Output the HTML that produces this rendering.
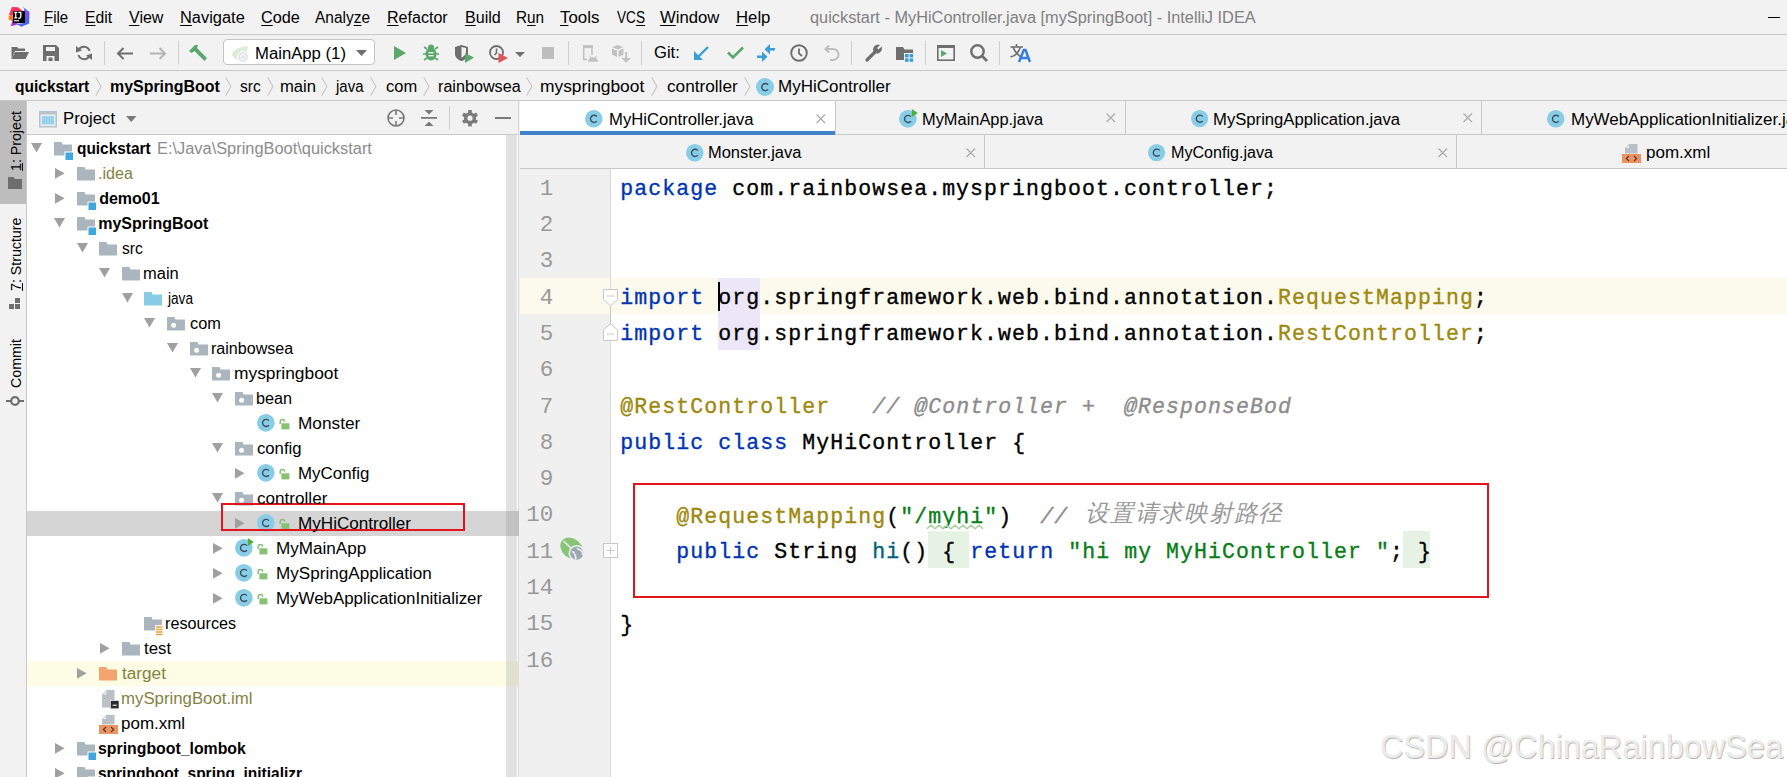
<!DOCTYPE html><html><head><meta charset="utf-8"><style>html,body{margin:0;padding:0;width:1787px;height:777px;overflow:hidden;position:relative;font-family:'Liberation Sans',sans-serif}</style></head><body><div style="position:absolute;left:0px;top:0px;width:1787px;height:777px;background:#f2f2f2;"></div><div style="position:absolute;left:0px;top:34px;width:1787px;height:1px;background:#c9c9c9;"></div><div style="position:absolute;left:0px;top:70px;width:1787px;height:1px;background:#c9c9c9;"></div><div style="position:absolute;left:0px;top:100px;width:1787px;height:1px;background:#c9c9c9;"></div><div style="position:absolute;left:26px;top:101px;width:1px;height:676px;background:#c9c9c9;"></div><div style="position:absolute;left:0px;top:101px;width:26px;height:103px;background:#bdbdbd;"></div><div style="position:absolute;left:27px;top:101px;width:492px;height:33px;background:#f2f2f2;"></div><div style="position:absolute;left:27px;top:134px;width:492px;height:1px;background:#c9c9c9;"></div><div style="position:absolute;left:27px;top:135px;width:492px;height:642px;background:#ffffff;"></div><div style="position:absolute;left:506px;top:135px;width:10.7px;height:642px;background:#e2e2e2;"></div><div style="position:absolute;left:518px;top:101px;width:1px;height:676px;background:#d9d9d9;"></div><div style="position:absolute;left:519px;top:101px;width:1px;height:676px;background:#f0f0f0;"></div><div style="position:absolute;left:520px;top:101px;width:1267px;height:33px;background:#f2f2f2;"></div><div style="position:absolute;left:520px;top:134px;width:1267px;height:1px;background:#c9c9c9;"></div><div style="position:absolute;left:520px;top:135px;width:1267px;height:33px;background:#f2f2f2;"></div><div style="position:absolute;left:520px;top:168px;width:1267px;height:1px;background:#c9c9c9;"></div><div style="position:absolute;left:520px;top:101px;width:315px;height:30px;background:#ffffff;"></div><div style="position:absolute;left:520px;top:131px;width:315px;height:4px;background:#4083c9;"></div><div style="position:absolute;left:835px;top:101px;width:1px;height:33px;background:#c9c9c9;"></div><div style="position:absolute;left:1125px;top:101px;width:1px;height:33px;background:#c9c9c9;"></div><div style="position:absolute;left:1481px;top:101px;width:1px;height:33px;background:#c9c9c9;"></div><div style="position:absolute;left:984px;top:135px;width:1px;height:33px;background:#c9c9c9;"></div><div style="position:absolute;left:1456px;top:135px;width:1px;height:33px;background:#c9c9c9;"></div><div style="position:absolute;left:520px;top:169px;width:1267px;height:608px;background:#ffffff;"></div><div style="position:absolute;left:520px;top:169px;width:90px;height:608px;background:#f0f0f0;"></div><div style="position:absolute;left:610px;top:169px;width:1px;height:608px;background:#d9d9d9;"></div><div style="position:absolute;left:520px;top:277.9px;width:1267px;height:36.3px;background:#fcfaed;"></div><div style="position:absolute;left:610px;top:277.9px;width:1px;height:36.3px;background:#d9d9d9;"></div><div style="position:absolute;left:1768px;top:17px;width:12px;height:1.3px;background:#000;"></div><svg style="position:absolute;left:4px;top:2px;overflow:visible" width="32" height="30" viewBox="4 2 32 30">
<polygon points="9,14.5 12,7 18,7.3 22,10.5 22,13 13,13 13,16" fill="#fe2f5f"/>
<polygon points="8.8,15.6 13.5,14.8 13.5,21.5 8.6,19.5" fill="#fa7c14"/>
<polygon points="10.8,26.2 13,19 18,24.2" fill="#a52ee0"/>
<polygon points="22.8,6.8 29.2,12 29.2,23.6 21.4,26.8 16.5,24 24.5,23 24.5,9" fill="#4b63f2"/>
<polygon points="24.5,9 29.2,12 29.2,18 24.5,17" fill="#7a4cf3"/>
<rect x="13" y="11" width="12" height="12" fill="#000"/>
<path d="M14.2 12.4 H17.3 M15.75 12.4 V17.9 M14.2 17.9 H17.3" stroke="#fff" stroke-width="1.25"/>
<path d="M18.2 12.4 H21.5 M20.8 12.4 V16.5 Q20.8 18.2 19.2 18.2 H18.3" stroke="#fff" stroke-width="1.35" fill="none"/>
<rect x="14" y="20" width="5" height="1.4" fill="#cfcfcf"/>
</svg><svg style="position:absolute;left:11px;top:46px;overflow:visible" width="18" height="14" viewBox="0 0 18 14"><path d="M0.5 1 H6 L7.5 2.5 H14 V5 H4 L0.5 13 Z" fill="#6e6e6e"/><path d="M4 6 H18 L14.5 13 H0.5 Z" fill="#6e6e6e"/></svg><svg style="position:absolute;left:43px;top:45px;overflow:visible" width="16" height="16" viewBox="0 0 16 16"><path d="M0 0 H13 L16 3 V16 H0 Z" fill="#6e6e6e"/><rect x="3" y="2" width="9" height="4" fill="#f2f2f2"/><rect x="3.5" y="11" width="8" height="5" fill="#f2f2f2"/><rect x="5.5" y="12.5" width="4" height="3.5" fill="#6e6e6e"/></svg><svg style="position:absolute;left:76px;top:45px;overflow:visible" width="16" height="16" viewBox="0 0 16 16"><path d="M13.5 6 A6 6 0 0 0 2.5 5" stroke="#6e6e6e" stroke-width="2" fill="none"/><path d="M2.5 10 A6 6 0 0 0 13.5 11" stroke="#6e6e6e" stroke-width="2" fill="none"/><polygon points="0,1 6,5.5 0,7.5" fill="#6e6e6e"/><polygon points="16,15 10,10.5 16,8.5" fill="#6e6e6e"/></svg><div style="position:absolute;left:104px;top:41px;width:1px;height:24px;background:#cfcfcf;"></div><svg style="position:absolute;left:116px;top:47px;overflow:visible" width="17" height="13" viewBox="0 0 17 13"><path d="M17 6.5 H3" stroke="#6e6e6e" stroke-width="2"/><path d="M7.5 1 L2 6.5 L7.5 12" stroke="#6e6e6e" stroke-width="2" fill="none"/></svg><svg style="position:absolute;left:150px;top:47px;overflow:visible" width="17" height="13" viewBox="0 0 17 13"><path d="M0 6.5 H14" stroke="#b4b4b4" stroke-width="2"/><path d="M9.5 1 L15 6.5 L9.5 12" stroke="#b4b4b4" stroke-width="2" fill="none"/></svg><div style="position:absolute;left:178px;top:41px;width:1px;height:24px;background:#cfcfcf;"></div><svg style="position:absolute;left:189px;top:44px;overflow:visible" width="19" height="18" viewBox="0 0 19 18"><path d="M0 7 L6 1 L9 1 L8 4 L18 14 L15.5 17 L5.5 7 L2.5 9 Z" fill="#59a869"/></svg><div style="position:absolute;left:223px;top:39px;width:152px;height:26px;border:1px solid #c4c4c4;border-radius:4px;background:#fff;box-sizing:border-box"></div><svg style="position:absolute;left:231px;top:46px;overflow:visible" width="20" height="17" viewBox="0 0 20 17"><path d="M1 9 C2 3 9 1 17 0 C16 8 12 13 4 13 C3 11 2 10 1 9 Z" fill="#d8ecd6"/><circle cx="12" cy="11" r="5.5" fill="#e3e6e8" stroke="#fff" stroke-width="1"/><circle cx="12" cy="11" r="2.5" fill="none" stroke="#fff" stroke-width="1"/></svg><svg style="position:absolute;left:356px;top:50px;overflow:visible" width="11" height="6" viewBox="0 0 11 6"><polygon points="0,0 11,0 5.5,6" fill="#6e6e6e"/></svg><svg style="position:absolute;left:394px;top:46px;overflow:visible" width="12" height="14" viewBox="0 0 12 14"><polygon points="0,0 12,7 0,14" fill="#59a869"/></svg><svg style="position:absolute;left:423px;top:44px;overflow:visible" width="16" height="17" viewBox="0 0 16 17"><ellipse cx="8" cy="10" rx="5.5" ry="6.5" fill="#59a869"/><circle cx="8" cy="3.5" r="3" fill="#59a869"/><path d="M1 3 L4 5 M15 3 L12 5 M0 10 H3 M13 10 H16 M1 16 L4 14 M15 16 L12 14" stroke="#59a869" stroke-width="1.6"/><rect x="5.5" y="8" width="5" height="1.4" fill="#f2f2f2"/><rect x="5.5" y="11" width="5" height="1.4" fill="#f2f2f2"/></svg><svg style="position:absolute;left:455px;top:45px;overflow:visible" width="19" height="18" viewBox="0 0 19 18"><path d="M0 2 L6.5 0 L13 2 V9 C13 13 9 15.5 6.5 16 C4 15.5 0 13 0 9 Z" fill="#6e6e6e"/><path d="M6.5 2 L11 3 V9 L6.5 13 Z" fill="#f2f2f2"/><polygon points="10,8 19,12.5 10,18" fill="#59a869"/></svg><svg style="position:absolute;left:489px;top:45px;overflow:visible" width="19" height="18" viewBox="0 0 19 18"><circle cx="7.5" cy="7.5" r="6.5" stroke="#6e6e6e" stroke-width="1.8" fill="none"/><path d="M7.5 3.5 V8 L5.5 10" stroke="#6e6e6e" stroke-width="1.6" fill="none"/><polygon points="9.5,8 19,13 9.5,18" fill="#e05555"/></svg><svg style="position:absolute;left:515px;top:52px;overflow:visible" width="10" height="5" viewBox="0 0 10 5"><polygon points="0,0 10,0 5,5" fill="#6e6e6e"/></svg><div style="position:absolute;left:542px;top:47px;width:12px;height:12px;background:#bdbdbd;"></div><div style="position:absolute;left:568px;top:41px;width:1px;height:24px;background:#cfcfcf;"></div><svg style="position:absolute;left:576px;top:40px;overflow:visible" width="28" height="26" viewBox="576 40 28 26"><path d="M592 55 V46 H583.7 V59.5 H587" stroke="#c2c2c2" stroke-width="1.6" fill="none"/><rect x="583" y="45.3" width="9.7" height="2.8" fill="#c2c2c2"/><path d="M588 61.8 A5 4.6 0 0 1 598 61.8 Z" fill="#c2c2c2"/><path d="M589.5 55.5 L591 58 M596.5 55.5 L595 58" stroke="#c2c2c2" stroke-width="1"/></svg><svg style="position:absolute;left:605px;top:40px;overflow:visible" width="30" height="26" viewBox="605 40 30 26"><polygon points="612.5,47.3 617.8,45 623,47.3 617.8,49.6" fill="#c2c2c2"/><polygon points="612,48.6 617,50.8 617,57 612,54.6" fill="#c2c2c2"/><polygon points="618.5,50.8 623.5,48.6 623.5,54.6 618.5,57" fill="#c2c2c2"/><rect x="625.2" y="52" width="1.9" height="6.5" fill="#c2c2c2"/><polygon points="621.2,58 631,58 626.1,62.8" fill="#c2c2c2"/></svg><div style="position:absolute;left:641px;top:41px;width:1px;height:24px;background:#cfcfcf;"></div><svg style="position:absolute;left:694px;top:46px;overflow:visible" width="15" height="14" viewBox="0 0 15 14"><path d="M14 1 L4 11" stroke="#389fd6" stroke-width="2.4"/><polygon points="0,5 0,14 9,14" fill="#389fd6"/></svg><svg style="position:absolute;left:727px;top:46px;overflow:visible" width="17" height="13" viewBox="0 0 17 13"><path d="M1 6.5 L6 11.5 L16 1.5" stroke="#59a869" stroke-width="2.6" fill="none"/></svg><svg style="position:absolute;left:750px;top:40px;overflow:visible" width="30" height="26" viewBox="750 40 30 26"><rect x="769" y="48" width="6" height="2.5" fill="#389fd6"/><polygon points="764.5,49.25 770,44 770,54.5" fill="#389fd6"/><rect x="757" y="55.5" width="6" height="2.5" fill="#389fd6"/><polygon points="767.5,56.75 762,51.5 762,62" fill="#389fd6"/></svg><svg style="position:absolute;left:790px;top:44px;overflow:visible" width="18" height="18" viewBox="0 0 18 18"><circle cx="9" cy="9" r="7.8" stroke="#6e6e6e" stroke-width="1.9" fill="none"/><path d="M9 4.5 V9.5 L12 12" stroke="#6e6e6e" stroke-width="1.8" fill="none"/></svg><svg style="position:absolute;left:824px;top:45px;overflow:visible" width="16" height="15" viewBox="0 0 16 15"><path d="M2 4 H9 A5.5 5.5 0 0 1 9 15 H6" stroke="#bdbdbd" stroke-width="2" fill="none"/><path d="M5 0.5 L1.5 4 L5 7.5" stroke="#bdbdbd" stroke-width="2" fill="none"/></svg><div style="position:absolute;left:851px;top:41px;width:1px;height:24px;background:#cfcfcf;"></div><svg style="position:absolute;left:865px;top:44px;overflow:visible" width="17" height="18" viewBox="0 0 17 18"><path d="M2 16 L10 8" stroke="#6e6e6e" stroke-width="3.2" stroke-linecap="round"/><path d="M8.5 7.5 A5 5 0 0 1 15 1 L12 4 L13.5 5.5 L16.5 2.5 A5 5 0 0 1 10 9 Z" fill="#6e6e6e"/></svg><svg style="position:absolute;left:896px;top:47px;overflow:visible" width="18" height="15" viewBox="0 0 18 15"><path d="M0 0 H7 L8.5 2.5 H17 V6 H8 V13 H0 Z" fill="#6e6e6e"/><rect x="9" y="7" width="3.6" height="3.4" fill="#389fd6"/><rect x="13.6" y="7" width="3.6" height="3.4" fill="#389fd6"/><rect x="9" y="11.4" width="3.6" height="3.4" fill="#389fd6"/><rect x="13.6" y="11.4" width="3.6" height="3.4" fill="#389fd6"/></svg><div style="position:absolute;left:925px;top:41px;width:1px;height:24px;background:#cfcfcf;"></div><svg style="position:absolute;left:937px;top:45px;overflow:visible" width="18" height="16" viewBox="0 0 18 16"><rect x="0.8" y="0.8" width="16.4" height="14.4" stroke="#6e6e6e" stroke-width="1.6" fill="none"/><rect x="0" y="0" width="18" height="3" fill="#6e6e6e"/><polygon points="4,5 10,8.5 4,12" fill="#59a869"/></svg><svg style="position:absolute;left:970px;top:44px;overflow:visible" width="18" height="18" viewBox="0 0 18 18"><circle cx="7.5" cy="7.5" r="6.2" stroke="#6e6e6e" stroke-width="2.4" fill="none"/><path d="M12 12 L17 17" stroke="#6e6e6e" stroke-width="2.6"/></svg><div style="position:absolute;left:999px;top:41px;width:1px;height:24px;background:#cfcfcf;"></div><svg style="position:absolute;left:1010px;top:44px;overflow:visible" width="20" height="18" viewBox="0 0 20 18"><path d="M0.5 3 H13 M6.5 0 V3 M3 3 C5 9 8 11 11 13 M10.5 3 C8.5 9 5 12 0.5 13" stroke="#6e6e6e" stroke-width="1.7" fill="none"/><path d="M9 18 L13.8 6 H15.5 L20 18 M10.8 14 H18" stroke="#2f7fe0" stroke-width="2.4" fill="none"/></svg><svg style="position:absolute;left:95px;top:77px;overflow:visible" width="7" height="19" viewBox="0 0 7 19"><path d="M0.7 0.5 L6 9.5 L0.7 18.5" stroke="#c4c4c4" stroke-width="1.1" fill="none"/></svg><svg style="position:absolute;left:225px;top:77px;overflow:visible" width="7" height="19" viewBox="0 0 7 19"><path d="M0.7 0.5 L6 9.5 L0.7 18.5" stroke="#c4c4c4" stroke-width="1.1" fill="none"/></svg><svg style="position:absolute;left:267px;top:77px;overflow:visible" width="7" height="19" viewBox="0 0 7 19"><path d="M0.7 0.5 L6 9.5 L0.7 18.5" stroke="#c4c4c4" stroke-width="1.1" fill="none"/></svg><svg style="position:absolute;left:321px;top:77px;overflow:visible" width="7" height="19" viewBox="0 0 7 19"><path d="M0.7 0.5 L6 9.5 L0.7 18.5" stroke="#c4c4c4" stroke-width="1.1" fill="none"/></svg><svg style="position:absolute;left:370px;top:77px;overflow:visible" width="7" height="19" viewBox="0 0 7 19"><path d="M0.7 0.5 L6 9.5 L0.7 18.5" stroke="#c4c4c4" stroke-width="1.1" fill="none"/></svg><svg style="position:absolute;left:423px;top:77px;overflow:visible" width="7" height="19" viewBox="0 0 7 19"><path d="M0.7 0.5 L6 9.5 L0.7 18.5" stroke="#c4c4c4" stroke-width="1.1" fill="none"/></svg><svg style="position:absolute;left:526px;top:77px;overflow:visible" width="7" height="19" viewBox="0 0 7 19"><path d="M0.7 0.5 L6 9.5 L0.7 18.5" stroke="#c4c4c4" stroke-width="1.1" fill="none"/></svg><svg style="position:absolute;left:651px;top:77px;overflow:visible" width="7" height="19" viewBox="0 0 7 19"><path d="M0.7 0.5 L6 9.5 L0.7 18.5" stroke="#c4c4c4" stroke-width="1.1" fill="none"/></svg><svg style="position:absolute;left:744px;top:77px;overflow:visible" width="7" height="19" viewBox="0 0 7 19"><path d="M0.7 0.5 L6 9.5 L0.7 18.5" stroke="#c4c4c4" stroke-width="1.1" fill="none"/></svg><svg style="position:absolute;left:756px;top:77.5px;overflow:visible" width="18" height="18" viewBox="0 0 18 18"><circle cx="9.0" cy="9.0" r="9.0" fill="#87cde8"/><path d="M12.1 6.8 A3.6 3.6 0 1 0 12.1 11.4" stroke="#3d4b55" stroke-width="1.35" fill="none"/></svg><div style="position:absolute;left:9px;top:170.5px;transform-origin:0 0;transform:rotate(-90deg);font:400 14.2px/14.2px 'Liberation Sans', sans-serif;color:#000;white-space:pre"><u style="text-underline-offset:1px">1</u>: Project</div><svg style="position:absolute;left:7.5px;top:177px;overflow:visible" width="14" height="12" viewBox="0 0 14 12"><path d="M0 0 H5.5 L7 2 H14 V12 H0 Z" fill="#6e6e6e"/></svg><div style="position:absolute;left:9px;top:291px;transform-origin:0 0;transform:rotate(-90deg);font:400 14.2px/14.2px 'Liberation Sans', sans-serif;color:#000;white-space:pre"><u style="text-underline-offset:1px">7</u>: Structure</div><svg style="position:absolute;left:8.5px;top:298px;overflow:visible" width="12" height="12" viewBox="0 0 12 12"><rect x="6" y="0" width="5" height="5" fill="#6e6e6e"/><rect x="0" y="6" width="5" height="5" fill="#6e6e6e"/><rect x="6" y="6" width="5" height="5" fill="#6e6e6e"/></svg><div style="position:absolute;left:9px;top:388px;transform-origin:0 0;transform:rotate(-90deg);font:400 14.2px/14.2px 'Liberation Sans', sans-serif;color:#000;white-space:pre">Commit</div><svg style="position:absolute;left:6px;top:394.5px;overflow:visible" width="18" height="12" viewBox="0 0 18 12"><circle cx="9" cy="6" r="3.8" stroke="#6e6e6e" stroke-width="2.2" fill="none"/><path d="M0 6 H5 M13 6 H18" stroke="#6e6e6e" stroke-width="2.2"/></svg><svg style="position:absolute;left:39px;top:110.5px;overflow:visible" width="18" height="16.5" viewBox="0 0 18 16.5"><rect x="0" y="0" width="18" height="16.5" fill="#b9c2c9"/><rect x="1.5" y="3.5" width="15" height="11.5" fill="#eef1f3"/><rect x="2.8" y="5" width="12.4" height="8.5" fill="#9ad3ec"/></svg><svg style="position:absolute;left:126px;top:116.4px;overflow:visible" width="10.5" height="6" viewBox="0 0 10.5 6"><polygon points="0,0 10.5,0 5.25,6" fill="#7a7a7a"/></svg><svg style="position:absolute;left:387px;top:109px;overflow:visible" width="18" height="18" viewBox="0 0 18 18"><circle cx="9" cy="9" r="8" stroke="#7a7a7a" stroke-width="1.6" fill="none"/><path d="M9 1 V6 M9 12 V17 M1 9 H6 M12 9 H17" stroke="#7a7a7a" stroke-width="1.6"/></svg><svg style="position:absolute;left:421px;top:110px;overflow:visible" width="16" height="16" viewBox="0 0 16 16"><rect x="0" y="7" width="16" height="1.8" fill="#7a7a7a"/><polygon points="3.5,0 12.5,0 8,4.5" fill="#7a7a7a"/><polygon points="3.5,16 12.5,16 8,11.5" fill="#7a7a7a"/></svg><div style="position:absolute;left:449px;top:106px;width:1px;height:24px;background:#cfcfcf;"></div><svg style="position:absolute;left:462px;top:109.6px;overflow:visible" width="16" height="16.4" viewBox="0 0 16 16.4"><circle cx="8" cy="8.2" r="6" fill="#7a7a7a"/><rect x="6.2" y="0" width="3.6" height="4" transform="rotate(0 8 8.2)" fill="#7a7a7a"/><rect x="6.2" y="0" width="3.6" height="4" transform="rotate(60 8 8.2)" fill="#7a7a7a"/><rect x="6.2" y="0" width="3.6" height="4" transform="rotate(120 8 8.2)" fill="#7a7a7a"/><rect x="6.2" y="0" width="3.6" height="4" transform="rotate(180 8 8.2)" fill="#7a7a7a"/><rect x="6.2" y="0" width="3.6" height="4" transform="rotate(240 8 8.2)" fill="#7a7a7a"/><rect x="6.2" y="0" width="3.6" height="4" transform="rotate(300 8 8.2)" fill="#7a7a7a"/><circle cx="8" cy="8.2" r="2.6" fill="#f2f2f2"/></svg><div style="position:absolute;left:495px;top:117px;width:15.5px;height:2px;background:#7a7a7a;"></div><svg style="position:absolute;left:585px;top:110px;overflow:visible" width="17.5" height="17.5" viewBox="0 0 17.5 17.5"><circle cx="8.75" cy="8.75" r="8.75" fill="#87cde8"/><path d="M11.85 6.55 A3.6 3.6 0 1 0 11.85 11.15" stroke="#3d4b55" stroke-width="1.35" fill="none"/></svg><svg style="position:absolute;left:815.5px;top:113.5px;overflow:visible" width="9.5" height="9.5" viewBox="0 0 9.5 9.5"><path d="M0.5 0.5 L9 9 M9 0.5 L0.5 9" stroke="#a8a8a8" stroke-width="1.1"/></svg><svg style="position:absolute;left:899px;top:110px;overflow:visible" width="17.7" height="17.7" viewBox="0 0 17.7 17.7"><circle cx="8.85" cy="8.85" r="8.85" fill="#87cde8"/><path d="M11.95 6.6499999999999995 A3.6 3.6 0 1 0 11.95 11.25" stroke="#3d4b55" stroke-width="1.35" fill="none"/><polygon points="12.85,-1 18.85,3 12.85,7" fill="#4dae3c"/></svg><svg style="position:absolute;left:1106px;top:113.3px;overflow:visible" width="9.5" height="9.5" viewBox="0 0 9.5 9.5"><path d="M0.5 0.5 L9 9 M9 0.5 L0.5 9" stroke="#a8a8a8" stroke-width="1.1"/></svg><svg style="position:absolute;left:1190.5px;top:110px;overflow:visible" width="17.2" height="17.2" viewBox="0 0 17.2 17.2"><circle cx="8.6" cy="8.6" r="8.6" fill="#87cde8"/><path d="M11.7 6.3999999999999995 A3.6 3.6 0 1 0 11.7 11.0" stroke="#3d4b55" stroke-width="1.35" fill="none"/></svg><svg style="position:absolute;left:1463.4px;top:113.3px;overflow:visible" width="9.5" height="9.5" viewBox="0 0 9.5 9.5"><path d="M0.5 0.5 L9 9 M9 0.5 L0.5 9" stroke="#a8a8a8" stroke-width="1.1"/></svg><svg style="position:absolute;left:1547.3px;top:110px;overflow:visible" width="17.5" height="17.5" viewBox="0 0 17.5 17.5"><circle cx="8.75" cy="8.75" r="8.75" fill="#87cde8"/><path d="M11.85 6.55 A3.6 3.6 0 1 0 11.85 11.15" stroke="#3d4b55" stroke-width="1.35" fill="none"/></svg><svg style="position:absolute;left:686px;top:144px;overflow:visible" width="17.5" height="17.5" viewBox="0 0 17.5 17.5"><circle cx="8.75" cy="8.75" r="8.75" fill="#87cde8"/><path d="M11.85 6.55 A3.6 3.6 0 1 0 11.85 11.15" stroke="#3d4b55" stroke-width="1.35" fill="none"/></svg><svg style="position:absolute;left:965.5px;top:147.5px;overflow:visible" width="9.5" height="9.5" viewBox="0 0 9.5 9.5"><path d="M0.5 0.5 L9 9 M9 0.5 L0.5 9" stroke="#a8a8a8" stroke-width="1.1"/></svg><svg style="position:absolute;left:1147.7px;top:144px;overflow:visible" width="17.2" height="17.2" viewBox="0 0 17.2 17.2"><circle cx="8.6" cy="8.6" r="8.6" fill="#87cde8"/><path d="M11.7 6.3999999999999995 A3.6 3.6 0 1 0 11.7 11.0" stroke="#3d4b55" stroke-width="1.35" fill="none"/></svg><svg style="position:absolute;left:1438.2px;top:147.5px;overflow:visible" width="9.5" height="9.5" viewBox="0 0 9.5 9.5"><path d="M0.5 0.5 L9 9 M9 0.5 L0.5 9" stroke="#a8a8a8" stroke-width="1.1"/></svg><svg style="position:absolute;left:1622px;top:144px;overflow:visible" width="19" height="19" viewBox="0 0 19 19"><path d="M3 9.5 V4 L7 0 H15.5 V9.5 Z" fill="#b9c0c6"/><path d="M3.8 4 H7 V0.8 Z" fill="#e8ebee"/><rect x="0" y="10" width="19" height="9" fill="#f0925e"/><path d="M7 12 L4.3 14.5 L7 17 M12 12 L14.7 14.5 L12 17" stroke="#3a3a3a" stroke-width="1.1" fill="none"/></svg><div style="position:absolute;left:27px;top:511px;width:479px;height:25px;background:#d5d5d5;"></div><div style="position:absolute;left:506px;top:511px;width:13px;height:25px;background:#c2c2c2;"></div><div style="position:absolute;left:27px;top:661px;width:479px;height:25px;background:#fdfde6;"></div><div style="position:absolute;left:506px;top:661px;width:13px;height:25px;background:#e1e1cf;"></div><svg style="position:absolute;left:31.4px;top:143px;overflow:visible" width="11" height="9.6" viewBox="0 0 11 9.6"><polygon points="0,0 11,0 5.5,9.6" fill="#a0a0a0"/></svg><svg style="position:absolute;left:54.0px;top:141.5px;overflow:visible" width="18" height="14" viewBox="0 0 18 14"><path d="M0 0 H7.5 L8.5 2.6 H18 V13.5 H0 Z" fill="#aab5be"/><rect x="10.5" y="9.5" width="8.5" height="8.5" fill="#fff"/><rect x="11.5" y="10.5" width="7.5" height="7.5" fill="#40a8dc"/></svg><svg style="position:absolute;left:54.5px;top:167.7px;overflow:visible" width="9.6" height="10.7" viewBox="0 0 9.6 10.7"><polygon points="0,0 9.6,5.35 0,10.7" fill="#a0a0a0"/></svg><svg style="position:absolute;left:76.6px;top:166.5px;overflow:visible" width="18" height="14" viewBox="0 0 18 14"><path d="M0 0 H7.5 L8.5 2.6 H18 V13.5 H0 Z" fill="#aab5be"/></svg><svg style="position:absolute;left:54.5px;top:192.7px;overflow:visible" width="9.6" height="10.7" viewBox="0 0 9.6 10.7"><polygon points="0,0 9.6,5.35 0,10.7" fill="#a0a0a0"/></svg><svg style="position:absolute;left:76.6px;top:191.5px;overflow:visible" width="18" height="14" viewBox="0 0 18 14"><path d="M0 0 H7.5 L8.5 2.6 H18 V13.5 H0 Z" fill="#aab5be"/><rect x="10.5" y="9.5" width="8.5" height="8.5" fill="#fff"/><rect x="11.5" y="10.5" width="7.5" height="7.5" fill="#40a8dc"/></svg><svg style="position:absolute;left:54.0px;top:218px;overflow:visible" width="11" height="9.6" viewBox="0 0 11 9.6"><polygon points="0,0 11,0 5.5,9.6" fill="#a0a0a0"/></svg><svg style="position:absolute;left:76.6px;top:216.5px;overflow:visible" width="18" height="14" viewBox="0 0 18 14"><path d="M0 0 H7.5 L8.5 2.6 H18 V13.5 H0 Z" fill="#aab5be"/><rect x="10.5" y="9.5" width="8.5" height="8.5" fill="#fff"/><rect x="11.5" y="10.5" width="7.5" height="7.5" fill="#40a8dc"/></svg><svg style="position:absolute;left:76.6px;top:243px;overflow:visible" width="11" height="9.6" viewBox="0 0 11 9.6"><polygon points="0,0 11,0 5.5,9.6" fill="#a0a0a0"/></svg><svg style="position:absolute;left:99.20000000000002px;top:241.5px;overflow:visible" width="18" height="14" viewBox="0 0 18 14"><path d="M0 0 H7.5 L8.5 2.6 H18 V13.5 H0 Z" fill="#aab5be"/></svg><svg style="position:absolute;left:99.20000000000002px;top:268px;overflow:visible" width="11" height="9.6" viewBox="0 0 11 9.6"><polygon points="0,0 11,0 5.5,9.6" fill="#a0a0a0"/></svg><svg style="position:absolute;left:121.80000000000001px;top:266.5px;overflow:visible" width="18" height="14" viewBox="0 0 18 14"><path d="M0 0 H7.5 L8.5 2.6 H18 V13.5 H0 Z" fill="#aab5be"/></svg><svg style="position:absolute;left:121.80000000000001px;top:293px;overflow:visible" width="11" height="9.6" viewBox="0 0 11 9.6"><polygon points="0,0 11,0 5.5,9.6" fill="#a0a0a0"/></svg><svg style="position:absolute;left:144.4px;top:291.5px;overflow:visible" width="18" height="14" viewBox="0 0 18 14"><path d="M0 0 H7.5 L8.5 2.6 H18 V13.5 H0 Z" fill="#87cbe6"/></svg><svg style="position:absolute;left:144.4px;top:318px;overflow:visible" width="11" height="9.6" viewBox="0 0 11 9.6"><polygon points="0,0 11,0 5.5,9.6" fill="#a0a0a0"/></svg><svg style="position:absolute;left:167.00000000000003px;top:316.5px;overflow:visible" width="18" height="14" viewBox="0 0 18 14"><path d="M0 0 H7.5 L8.5 2.6 H18 V13.5 H0 Z" fill="#aab5be"/><circle cx="6.6" cy="8.2" r="2.5" fill="#fff"/></svg><svg style="position:absolute;left:167.00000000000003px;top:343px;overflow:visible" width="11" height="9.6" viewBox="0 0 11 9.6"><polygon points="0,0 11,0 5.5,9.6" fill="#a0a0a0"/></svg><svg style="position:absolute;left:189.60000000000002px;top:341.5px;overflow:visible" width="18" height="14" viewBox="0 0 18 14"><path d="M0 0 H7.5 L8.5 2.6 H18 V13.5 H0 Z" fill="#aab5be"/><circle cx="6.6" cy="8.2" r="2.5" fill="#fff"/></svg><svg style="position:absolute;left:189.60000000000002px;top:368px;overflow:visible" width="11" height="9.6" viewBox="0 0 11 9.6"><polygon points="0,0 11,0 5.5,9.6" fill="#a0a0a0"/></svg><svg style="position:absolute;left:212.20000000000002px;top:366.5px;overflow:visible" width="18" height="14" viewBox="0 0 18 14"><path d="M0 0 H7.5 L8.5 2.6 H18 V13.5 H0 Z" fill="#aab5be"/><circle cx="6.6" cy="8.2" r="2.5" fill="#fff"/></svg><svg style="position:absolute;left:212.20000000000002px;top:393px;overflow:visible" width="11" height="9.6" viewBox="0 0 11 9.6"><polygon points="0,0 11,0 5.5,9.6" fill="#a0a0a0"/></svg><svg style="position:absolute;left:234.8px;top:391.5px;overflow:visible" width="18" height="14" viewBox="0 0 18 14"><path d="M0 0 H7.5 L8.5 2.6 H18 V13.5 H0 Z" fill="#aab5be"/><circle cx="6.6" cy="8.2" r="2.5" fill="#fff"/></svg><svg style="position:absolute;left:257.4px;top:414.2px;overflow:visible" width="17.7" height="17.7" viewBox="0 0 17.7 17.7"><circle cx="8.85" cy="8.85" r="8.85" fill="#87cde8"/><path d="M11.95 6.6499999999999995 A3.6 3.6 0 1 0 11.95 11.25" stroke="#3d4b55" stroke-width="1.35" fill="none"/></svg><svg style="position:absolute;left:279.4px;top:418.5px;overflow:visible" width="11" height="10.5" viewBox="0 0 11 10.5"><path d="M1.2 5 V2.8 A2.2 2.2 0 0 1 5.6 2.8" stroke="#87c274" stroke-width="1.5" fill="none"/><rect x="2.4" y="4.3" width="8" height="6.1" fill="#87c274"/></svg><svg style="position:absolute;left:212.20000000000002px;top:443px;overflow:visible" width="11" height="9.6" viewBox="0 0 11 9.6"><polygon points="0,0 11,0 5.5,9.6" fill="#a0a0a0"/></svg><svg style="position:absolute;left:234.8px;top:441.5px;overflow:visible" width="18" height="14" viewBox="0 0 18 14"><path d="M0 0 H7.5 L8.5 2.6 H18 V13.5 H0 Z" fill="#aab5be"/><circle cx="6.6" cy="8.2" r="2.5" fill="#fff"/></svg><svg style="position:absolute;left:235.3px;top:467.7px;overflow:visible" width="9.6" height="10.7" viewBox="0 0 9.6 10.7"><polygon points="0,0 9.6,5.35 0,10.7" fill="#a0a0a0"/></svg><svg style="position:absolute;left:257.4px;top:464.2px;overflow:visible" width="17.7" height="17.7" viewBox="0 0 17.7 17.7"><circle cx="8.85" cy="8.85" r="8.85" fill="#87cde8"/><path d="M11.95 6.6499999999999995 A3.6 3.6 0 1 0 11.95 11.25" stroke="#3d4b55" stroke-width="1.35" fill="none"/></svg><svg style="position:absolute;left:279.4px;top:468.5px;overflow:visible" width="11" height="10.5" viewBox="0 0 11 10.5"><path d="M1.2 5 V2.8 A2.2 2.2 0 0 1 5.6 2.8" stroke="#87c274" stroke-width="1.5" fill="none"/><rect x="2.4" y="4.3" width="8" height="6.1" fill="#87c274"/></svg><svg style="position:absolute;left:212.20000000000002px;top:493px;overflow:visible" width="11" height="9.6" viewBox="0 0 11 9.6"><polygon points="0,0 11,0 5.5,9.6" fill="#a0a0a0"/></svg><svg style="position:absolute;left:234.8px;top:491.5px;overflow:visible" width="18" height="14" viewBox="0 0 18 14"><path d="M0 0 H7.5 L8.5 2.6 H18 V13.5 H0 Z" fill="#aab5be"/><circle cx="6.6" cy="8.2" r="2.5" fill="#fff"/></svg><svg style="position:absolute;left:235.3px;top:517.7px;overflow:visible" width="9.6" height="10.7" viewBox="0 0 9.6 10.7"><polygon points="0,0 9.6,5.35 0,10.7" fill="#a0a0a0"/></svg><svg style="position:absolute;left:257.4px;top:514.2px;overflow:visible" width="17.7" height="17.7" viewBox="0 0 17.7 17.7"><circle cx="8.85" cy="8.85" r="8.85" fill="#87cde8"/><path d="M11.95 6.6499999999999995 A3.6 3.6 0 1 0 11.95 11.25" stroke="#3d4b55" stroke-width="1.35" fill="none"/></svg><svg style="position:absolute;left:279.4px;top:518.5px;overflow:visible" width="11" height="10.5" viewBox="0 0 11 10.5"><path d="M1.2 5 V2.8 A2.2 2.2 0 0 1 5.6 2.8" stroke="#87c274" stroke-width="1.5" fill="none"/><rect x="2.4" y="4.3" width="8" height="6.1" fill="#87c274"/></svg><svg style="position:absolute;left:212.70000000000002px;top:542.7px;overflow:visible" width="9.6" height="10.7" viewBox="0 0 9.6 10.7"><polygon points="0,0 9.6,5.35 0,10.7" fill="#a0a0a0"/></svg><svg style="position:absolute;left:234.8px;top:539.2px;overflow:visible" width="17.7" height="17.7" viewBox="0 0 17.7 17.7"><circle cx="8.85" cy="8.85" r="8.85" fill="#87cde8"/><path d="M11.95 6.6499999999999995 A3.6 3.6 0 1 0 11.95 11.25" stroke="#3d4b55" stroke-width="1.35" fill="none"/><polygon points="12.85,-1 18.85,3 12.85,7" fill="#4dae3c"/></svg><svg style="position:absolute;left:256.8px;top:543.5px;overflow:visible" width="11" height="10.5" viewBox="0 0 11 10.5"><path d="M1.2 5 V2.8 A2.2 2.2 0 0 1 5.6 2.8" stroke="#87c274" stroke-width="1.5" fill="none"/><rect x="2.4" y="4.3" width="8" height="6.1" fill="#87c274"/></svg><svg style="position:absolute;left:212.70000000000002px;top:567.7px;overflow:visible" width="9.6" height="10.7" viewBox="0 0 9.6 10.7"><polygon points="0,0 9.6,5.35 0,10.7" fill="#a0a0a0"/></svg><svg style="position:absolute;left:234.8px;top:564.2px;overflow:visible" width="17.7" height="17.7" viewBox="0 0 17.7 17.7"><circle cx="8.85" cy="8.85" r="8.85" fill="#87cde8"/><path d="M11.95 6.6499999999999995 A3.6 3.6 0 1 0 11.95 11.25" stroke="#3d4b55" stroke-width="1.35" fill="none"/></svg><svg style="position:absolute;left:256.8px;top:568.5px;overflow:visible" width="11" height="10.5" viewBox="0 0 11 10.5"><path d="M1.2 5 V2.8 A2.2 2.2 0 0 1 5.6 2.8" stroke="#87c274" stroke-width="1.5" fill="none"/><rect x="2.4" y="4.3" width="8" height="6.1" fill="#87c274"/></svg><svg style="position:absolute;left:212.70000000000002px;top:592.7px;overflow:visible" width="9.6" height="10.7" viewBox="0 0 9.6 10.7"><polygon points="0,0 9.6,5.35 0,10.7" fill="#a0a0a0"/></svg><svg style="position:absolute;left:234.8px;top:589.2px;overflow:visible" width="17.7" height="17.7" viewBox="0 0 17.7 17.7"><circle cx="8.85" cy="8.85" r="8.85" fill="#87cde8"/><path d="M11.95 6.6499999999999995 A3.6 3.6 0 1 0 11.95 11.25" stroke="#3d4b55" stroke-width="1.35" fill="none"/></svg><svg style="position:absolute;left:256.8px;top:593.5px;overflow:visible" width="11" height="10.5" viewBox="0 0 11 10.5"><path d="M1.2 5 V2.8 A2.2 2.2 0 0 1 5.6 2.8" stroke="#87c274" stroke-width="1.5" fill="none"/><rect x="2.4" y="4.3" width="8" height="6.1" fill="#87c274"/></svg><svg style="position:absolute;left:144.4px;top:616.5px;overflow:visible" width="18" height="14" viewBox="0 0 18 14"><path d="M0 0 H7.5 L8.5 2.6 H18 V13.5 H0 Z" fill="#aab5be"/><rect x="11" y="8" width="8" height="11" fill="#fff"/><path d="M12 10 H18.5 M12 12.5 H18.5 M12 15 H18.5 M12 17.5 H18.5" stroke="#e8a33d" stroke-width="1.4"/></svg><svg style="position:absolute;left:99.70000000000002px;top:642.7px;overflow:visible" width="9.6" height="10.7" viewBox="0 0 9.6 10.7"><polygon points="0,0 9.6,5.35 0,10.7" fill="#a0a0a0"/></svg><svg style="position:absolute;left:121.80000000000001px;top:641.5px;overflow:visible" width="18" height="14" viewBox="0 0 18 14"><path d="M0 0 H7.5 L8.5 2.6 H18 V13.5 H0 Z" fill="#aab5be"/></svg><svg style="position:absolute;left:77.1px;top:667.7px;overflow:visible" width="9.6" height="10.7" viewBox="0 0 9.6 10.7"><polygon points="0,0 9.6,5.35 0,10.7" fill="#a0a0a0"/></svg><svg style="position:absolute;left:99.20000000000002px;top:666.5px;overflow:visible" width="18" height="14" viewBox="0 0 18 14"><path d="M0 0 H7.5 L8.5 2.6 H18 V13.5 H0 Z" fill="#f4a56f"/></svg><svg style="position:absolute;left:101.50000000000001px;top:689.5px;overflow:visible" width="17" height="19" viewBox="0 0 17 19"><path d="M0 4.5 L4.5 0 H12.5 V17.5 H0 Z" fill="#b9c0c6"/><path d="M0.8 4.5 H4.5 V0.8 Z" fill="#e8ebee"/><rect x="8" y="10" width="9" height="9" fill="#fff"/><rect x="8.7" y="10.8" width="8" height="7.6" fill="#2b2b2b"/><rect x="10.7" y="14.6" width="4" height="1.3" fill="#ddd"/></svg><svg style="position:absolute;left:99.20000000000002px;top:714.5px;overflow:visible" width="19" height="19" viewBox="0 0 19 19"><path d="M3 9.5 V4 L7 0 H15.5 V9.5 Z" fill="#b9c0c6"/><path d="M3.8 4 H7 V0.8 Z" fill="#e8ebee"/><rect x="0" y="10" width="19" height="9" fill="#f0925e"/><path d="M7 12 L4.3 14.5 L7 17 M12 12 L14.7 14.5 L12 17" stroke="#3a3a3a" stroke-width="1.1" fill="none"/></svg><svg style="position:absolute;left:54.5px;top:742.7px;overflow:visible" width="9.6" height="10.7" viewBox="0 0 9.6 10.7"><polygon points="0,0 9.6,5.35 0,10.7" fill="#a0a0a0"/></svg><svg style="position:absolute;left:76.6px;top:741.5px;overflow:visible" width="18" height="14" viewBox="0 0 18 14"><path d="M0 0 H7.5 L8.5 2.6 H18 V13.5 H0 Z" fill="#aab5be"/><rect x="10.5" y="9.5" width="8.5" height="8.5" fill="#fff"/><rect x="11.5" y="10.5" width="7.5" height="7.5" fill="#40a8dc"/></svg><svg style="position:absolute;left:54.5px;top:767.7px;overflow:visible" width="9.6" height="10.7" viewBox="0 0 9.6 10.7"><polygon points="0,0 9.6,5.35 0,10.7" fill="#a0a0a0"/></svg><svg style="position:absolute;left:76.6px;top:766.5px;overflow:visible" width="18" height="14" viewBox="0 0 18 14"><path d="M0 0 H7.5 L8.5 2.6 H18 V13.5 H0 Z" fill="#aab5be"/><rect x="10.5" y="9.5" width="8.5" height="8.5" fill="#fff"/><rect x="11.5" y="10.5" width="7.5" height="7.5" fill="#40a8dc"/></svg><div style="position:absolute;left:221px;top:503px;width:244px;height:28px;border:2px solid #e3141b;box-sizing:border-box"></div><div style="position:absolute;left:717.99px;top:277.9px;width:41.910000000000004px;height:36.3px;background:#ebe7f8;"></div><div style="position:absolute;left:717.99px;top:314.2px;width:41.910000000000004px;height:36.3px;background:#ebe7f8;"></div><div style="position:absolute;left:927.5400000000001px;top:531px;width:41.910000000000004px;height:37px;background:#e6f2e3;"></div><div style="position:absolute;left:1402.52px;top:531px;width:27.94px;height:37px;background:#e6f2e3;"></div><div style="position:absolute;left:620.2px;top:179.11px;font:400 21.5px/21.5px 'Liberation Mono', monospace;letter-spacing:1.095px;-webkit-text-stroke:0.35px currentColor;white-space:pre"><span style="color:#0033b3;">package</span><span style="color:#000000;"> com.rainbowsea.myspringboot.controller;</span></div><div style="position:absolute;left:452px;width:101.3px;text-align:right;top:177.75px;font:400 22.5px/22.5px 'Liberation Mono', monospace;color:#999999;white-space:pre">1</div><div style="position:absolute;left:620.2px;top:215.41px;font:400 21.5px/21.5px 'Liberation Mono', monospace;letter-spacing:1.095px;-webkit-text-stroke:0.35px currentColor;white-space:pre"></div><div style="position:absolute;left:452px;width:101.3px;text-align:right;top:214.05px;font:400 22.5px/22.5px 'Liberation Mono', monospace;color:#999999;white-space:pre">2</div><div style="position:absolute;left:620.2px;top:251.71px;font:400 21.5px/21.5px 'Liberation Mono', monospace;letter-spacing:1.095px;-webkit-text-stroke:0.35px currentColor;white-space:pre"></div><div style="position:absolute;left:452px;width:101.3px;text-align:right;top:250.35px;font:400 22.5px/22.5px 'Liberation Mono', monospace;color:#999999;white-space:pre">3</div><div style="position:absolute;left:620.2px;top:288.01px;font:400 21.5px/21.5px 'Liberation Mono', monospace;letter-spacing:1.095px;-webkit-text-stroke:0.35px currentColor;white-space:pre"><span style="color:#0033b3;">import</span><span style="color:#000000;"> org.springframework.web.bind.annotation.</span><span style="color:#9e880d;">RequestMapping</span><span style="color:#000000;">;</span></div><div style="position:absolute;left:452px;width:101.3px;text-align:right;top:286.65px;font:400 22.5px/22.5px 'Liberation Mono', monospace;color:#999999;white-space:pre">4</div><div style="position:absolute;left:620.2px;top:324.31px;font:400 21.5px/21.5px 'Liberation Mono', monospace;letter-spacing:1.095px;-webkit-text-stroke:0.35px currentColor;white-space:pre"><span style="color:#0033b3;">import</span><span style="color:#000000;"> org.springframework.web.bind.annotation.</span><span style="color:#9e880d;">RestController</span><span style="color:#000000;">;</span></div><div style="position:absolute;left:452px;width:101.3px;text-align:right;top:322.95px;font:400 22.5px/22.5px 'Liberation Mono', monospace;color:#999999;white-space:pre">5</div><div style="position:absolute;left:620.2px;top:360.61px;font:400 21.5px/21.5px 'Liberation Mono', monospace;letter-spacing:1.095px;-webkit-text-stroke:0.35px currentColor;white-space:pre"></div><div style="position:absolute;left:452px;width:101.3px;text-align:right;top:359.25px;font:400 22.5px/22.5px 'Liberation Mono', monospace;color:#999999;white-space:pre">6</div><div style="position:absolute;left:620.2px;top:396.91px;font:400 21.5px/21.5px 'Liberation Mono', monospace;letter-spacing:1.095px;-webkit-text-stroke:0.35px currentColor;white-space:pre"><span style="color:#9e880d;">@RestController</span><span style="color:#000000;">   </span><span style="color:#8c8c8c;font-style:italic;">// @Controller +  @ResponseBod</span></div><div style="position:absolute;left:452px;width:101.3px;text-align:right;top:395.55px;font:400 22.5px/22.5px 'Liberation Mono', monospace;color:#999999;white-space:pre">7</div><div style="position:absolute;left:620.2px;top:433.21px;font:400 21.5px/21.5px 'Liberation Mono', monospace;letter-spacing:1.095px;-webkit-text-stroke:0.35px currentColor;white-space:pre"><span style="color:#0033b3;">public</span><span style="color:#000000;"> </span><span style="color:#0033b3;">class</span><span style="color:#000000;"> MyHiController {</span></div><div style="position:absolute;left:452px;width:101.3px;text-align:right;top:431.85px;font:400 22.5px/22.5px 'Liberation Mono', monospace;color:#999999;white-space:pre">8</div><div style="position:absolute;left:620.2px;top:469.51px;font:400 21.5px/21.5px 'Liberation Mono', monospace;letter-spacing:1.095px;-webkit-text-stroke:0.35px currentColor;white-space:pre"></div><div style="position:absolute;left:452px;width:101.3px;text-align:right;top:468.15px;font:400 22.5px/22.5px 'Liberation Mono', monospace;color:#999999;white-space:pre">9</div><div style="position:absolute;left:620.2px;top:505.81px;font:400 21.5px/21.5px 'Liberation Mono', monospace;letter-spacing:1.095px;-webkit-text-stroke:0.35px currentColor;white-space:pre"><span style="color:#000000;">    </span><span style="color:#9e880d;">@RequestMapping</span><span style="color:#000000;">(</span><span style="color:#067d17;">&quot;/myhi&quot;</span><span style="color:#000000;">)  </span><span style="color:#8c8c8c;font-style:italic;">//</span><span style="color:#000000;"> </span><span style="color:#999999;font-style:italic;letter-spacing:1.75px;margin-left:3px;font-size:23.5px;-webkit-text-stroke:0;position:relative;top:-1.5px;">设置请求映射路径</span></div><div style="position:absolute;left:452px;width:101.3px;text-align:right;top:504.45px;font:400 22.5px/22.5px 'Liberation Mono', monospace;color:#999999;white-space:pre">10</div><div style="position:absolute;left:620.2px;top:542.11px;font:400 21.5px/21.5px 'Liberation Mono', monospace;letter-spacing:1.095px;-webkit-text-stroke:0.35px currentColor;white-space:pre"><span style="color:#000000;">    </span><span style="color:#0033b3;">public</span><span style="color:#000000;"> String </span><span style="color:#00627a;">hi</span><span style="color:#000000;">() { </span><span style="color:#0033b3;">return</span><span style="color:#000000;"> </span><span style="color:#067d17;">&quot;hi my MyHiController &quot;</span><span style="color:#000000;">; }</span></div><div style="position:absolute;left:452px;width:101.3px;text-align:right;top:540.75px;font:400 22.5px/22.5px 'Liberation Mono', monospace;color:#999999;white-space:pre">11</div><div style="position:absolute;left:620.2px;top:578.41px;font:400 21.5px/21.5px 'Liberation Mono', monospace;letter-spacing:1.095px;-webkit-text-stroke:0.35px currentColor;white-space:pre"></div><div style="position:absolute;left:452px;width:101.3px;text-align:right;top:577.05px;font:400 22.5px/22.5px 'Liberation Mono', monospace;color:#999999;white-space:pre">14</div><div style="position:absolute;left:620.2px;top:614.71px;font:400 21.5px/21.5px 'Liberation Mono', monospace;letter-spacing:1.095px;-webkit-text-stroke:0.35px currentColor;white-space:pre"><span style="color:#000000;">}</span></div><div style="position:absolute;left:452px;width:101.3px;text-align:right;top:613.35px;font:400 22.5px/22.5px 'Liberation Mono', monospace;color:#999999;white-space:pre">15</div><div style="position:absolute;left:620.2px;top:651.01px;font:400 21.5px/21.5px 'Liberation Mono', monospace;letter-spacing:1.095px;-webkit-text-stroke:0.35px currentColor;white-space:pre"></div><div style="position:absolute;left:452px;width:101.3px;text-align:right;top:649.65px;font:400 22.5px/22.5px 'Liberation Mono', monospace;color:#999999;white-space:pre">16</div><div style="position:absolute;left:717.5px;top:281.5px;width:2px;height:29px;background:#000;"></div><svg style="position:absolute;left:603px;top:289px;overflow:visible" width="15" height="17" viewBox="0 0 15 17"><path d="M0.5 0.5 H14.5 V10.5 L7.5 16.8 L0.5 10.5 Z" fill="#fff" stroke="#c8c8c8"/><path d="M4 7 H11" stroke="#c8c8c8"/></svg><svg style="position:absolute;left:603px;top:322.5px;overflow:visible" width="15" height="18" viewBox="0 0 15 18"><path d="M0.5 17.5 H14.5 V7 L7.5 0.5 L0.5 7 Z" fill="#fff" stroke="#c8c8c8"/><path d="M4 11 H11" stroke="#c8c8c8"/></svg><div style="position:absolute;left:610px;top:305.5px;width:1px;height:17.5px;background:#c8c8c8;"></div><svg style="position:absolute;left:603px;top:543px;overflow:visible" width="15" height="15" viewBox="0 0 15 15"><rect x="0.5" y="0.5" width="14" height="14" fill="#fff" stroke="#c8c8c8"/><path d="M3.5 7.5 H11.5 M7.5 3.5 V11.5" stroke="#c8c8c8"/></svg><svg style="position:absolute;left:555px;top:532px;overflow:visible" width="35" height="34" viewBox="0 0 35 34"><ellipse cx="16.6" cy="16.4" rx="12.3" ry="9.6" transform="rotate(40 16.6 16.4)" fill="#87c476"/><path d="M8.5 9 L16.5 16.5" stroke="#f0f0f0" stroke-width="1.7"/><circle cx="21.7" cy="21.2" r="8.2" fill="#f0f0f0"/><circle cx="21.7" cy="21.2" r="6.6" fill="#9aa8b3"/><path d="M17 20 C18.5 19 19 21 20 23 C21 25 21 26.5 20.5 27.5 M22 16 C23 17 24 18 26 18.5 C27.5 19 27.8 21 27.5 23" stroke="#f0f0f0" stroke-width="1.6" fill="none"/></svg><svg style="position:absolute;left:927px;top:524px;overflow:visible" width="57" height="6" viewBox="0 0 57 6"><path d="M0 4.8 L4 1.2 L8 4.8 L12 1.2 L16 4.8 L20 1.2 L24 4.8 L28 1.2 L32 4.8 L36 1.2 L40 4.8 L44 1.2 L48 4.8 L52 1.2 L56 4.8" stroke="#a5cf9e" stroke-width="1.5" fill="none"/></svg><div style="position:absolute;left:633px;top:482.5px;width:855.5px;height:115px;border:2.5px solid #e3141b;box-sizing:border-box"></div><div id="t0" style="position:absolute;left:44.3px;top:10.20px;font:400 16px/16px 'Liberation Sans', sans-serif;color:#000;white-space:pre;transform:scaleX(0.9346);transform-origin:0 0;"><span style="text-decoration:underline;text-underline-offset:1.5px;text-decoration-thickness:1px">F</span>ile</div><div id="t1" style="position:absolute;left:85.1px;top:10.20px;font:400 16px/16px 'Liberation Sans', sans-serif;color:#000;white-space:pre;transform:scaleX(0.9821);transform-origin:0 0;"><span style="text-decoration:underline;text-underline-offset:1.5px;text-decoration-thickness:1px">E</span>dit</div><div id="t2" style="position:absolute;left:129.0px;top:10.20px;font:400 16px/16px 'Liberation Sans', sans-serif;color:#000;white-space:pre;transform:scaleX(1.0000);transform-origin:0 0;"><span style="text-decoration:underline;text-underline-offset:1.5px;text-decoration-thickness:1px">V</span>iew</div><div id="t3" style="position:absolute;left:179.9px;top:10.20px;font:400 16px/16px 'Liberation Sans', sans-serif;color:#000;white-space:pre;transform:scaleX(1.0254);transform-origin:0 0;"><span style="text-decoration:underline;text-underline-offset:1.5px;text-decoration-thickness:1px">N</span>avigate</div><div id="t4" style="position:absolute;left:260.8px;top:10.20px;font:400 16px/16px 'Liberation Sans', sans-serif;color:#000;white-space:pre;transform:scaleX(1.0158);transform-origin:0 0;"><span style="text-decoration:underline;text-underline-offset:1.5px;text-decoration-thickness:1px">C</span>ode</div><div id="t5" style="position:absolute;left:315.4px;top:10.20px;font:400 16px/16px 'Liberation Sans', sans-serif;color:#000;white-space:pre;transform:scaleX(0.9667);transform-origin:0 0;">Analy<span style="text-decoration:underline;text-underline-offset:1.5px;text-decoration-thickness:1px">z</span>e</div><div id="t6" style="position:absolute;left:386.5px;top:10.20px;font:400 16px/16px 'Liberation Sans', sans-serif;color:#000;white-space:pre;transform:scaleX(1.0033);transform-origin:0 0;"><span style="text-decoration:underline;text-underline-offset:1.5px;text-decoration-thickness:1px">R</span>efactor</div><div id="t7" style="position:absolute;left:465.4px;top:10.20px;font:400 16px/16px 'Liberation Sans', sans-serif;color:#000;white-space:pre;transform:scaleX(1.0057);transform-origin:0 0;"><span style="text-decoration:underline;text-underline-offset:1.5px;text-decoration-thickness:1px">B</span>uild</div><div id="t8" style="position:absolute;left:515.64px;top:10.20px;font:400 16px/16px 'Liberation Sans', sans-serif;color:#000;white-space:pre;transform:scaleX(0.9571);transform-origin:0 0;">R<span style="text-decoration:underline;text-underline-offset:1.5px;text-decoration-thickness:1px">u</span>n</div><div id="t9" style="position:absolute;left:560.2px;top:10.20px;font:400 16px/16px 'Liberation Sans', sans-serif;color:#000;white-space:pre;transform:scaleX(1.0541);transform-origin:0 0;"><span style="text-decoration:underline;text-underline-offset:1.5px;text-decoration-thickness:1px">T</span>ools</div><div id="t10" style="position:absolute;left:616.5px;top:10.20px;font:400 16px/16px 'Liberation Sans', sans-serif;color:#000;white-space:pre;transform:scaleX(0.8515);transform-origin:0 0;">VC<span style="text-decoration:underline;text-underline-offset:1.5px;text-decoration-thickness:1px">S</span></div><div id="t11" style="position:absolute;left:660.2px;top:10.20px;font:400 16px/16px 'Liberation Sans', sans-serif;color:#000;white-space:pre;transform:scaleX(1.0421);transform-origin:0 0;"><span style="text-decoration:underline;text-underline-offset:1.5px;text-decoration-thickness:1px">W</span>indow</div><div id="t12" style="position:absolute;left:736.0px;top:10.20px;font:400 16px/16px 'Liberation Sans', sans-serif;color:#000;white-space:pre;transform:scaleX(1.0455);transform-origin:0 0;"><span style="text-decoration:underline;text-underline-offset:1.5px;text-decoration-thickness:1px">H</span>elp</div><div id="t13" style="position:absolute;left:809.9px;top:10.20px;font:400 16px/16px 'Liberation Sans', sans-serif;color:#808080;white-space:pre;transform:scaleX(1.0208);transform-origin:0 0;">quickstart - MyHiController.java [mySpringBoot] - IntelliJ IDEA</div><div id="t14" style="position:absolute;left:255.46px;top:46.00px;font:400 16px/16px 'Liberation Sans', sans-serif;color:#000;white-space:pre;transform:scaleX(1.0435);transform-origin:0 0;">MainApp (1)</div><div id="t15" style="position:absolute;left:653.67px;top:45.40px;font:400 16px/16px 'Liberation Sans', sans-serif;color:#000;white-space:pre;transform:scaleX(1.0348);transform-origin:0 0;">Git:</div><div id="t16" style="position:absolute;left:15.4px;top:78.70px;font:700 16px/16px 'Liberation Sans', sans-serif;color:#000;white-space:pre;transform:scaleX(0.9701);transform-origin:0 0;">quickstart</div><div id="t17" style="position:absolute;left:109.5px;top:78.70px;font:700 16px/16px 'Liberation Sans', sans-serif;color:#000;white-space:pre;transform:scaleX(0.9963);transform-origin:0 0;">mySpringBoot</div><div id="t18" style="position:absolute;left:240.4px;top:78.70px;font:400 16px/16px 'Liberation Sans', sans-serif;color:#000;white-space:pre;transform:scaleX(0.9667);transform-origin:0 0;">src</div><div id="t19" style="position:absolute;left:280.36px;top:78.70px;font:400 16px/16px 'Liberation Sans', sans-serif;color:#000;white-space:pre;transform:scaleX(1.0394);transform-origin:0 0;">main</div><div id="t20" style="position:absolute;left:335.54px;top:78.70px;font:400 16px/16px 'Liberation Sans', sans-serif;color:#000;white-space:pre;transform:scaleX(0.9387);transform-origin:0 0;">java</div><div id="t21" style="position:absolute;left:385.5px;top:78.70px;font:400 16px/16px 'Liberation Sans', sans-serif;color:#000;white-space:pre;transform:scaleX(1.0300);transform-origin:0 0;">com</div><div id="t22" style="position:absolute;left:437.69px;top:78.70px;font:400 16px/16px 'Liberation Sans', sans-serif;color:#000;white-space:pre;transform:scaleX(1.0099);transform-origin:0 0;">rainbowsea</div><div id="t23" style="position:absolute;left:540.31px;top:78.70px;font:400 16px/16px 'Liberation Sans', sans-serif;color:#000;white-space:pre;transform:scaleX(1.0853);transform-origin:0 0;">myspringboot</div><div id="t24" style="position:absolute;left:666.6px;top:78.70px;font:400 16px/16px 'Liberation Sans', sans-serif;color:#000;white-space:pre;transform:scaleX(1.0742);transform-origin:0 0;">controller</div><div id="t25" style="position:absolute;left:778.44px;top:78.70px;font:400 16px/16px 'Liberation Sans', sans-serif;color:#000;white-space:pre;transform:scaleX(1.0648);transform-origin:0 0;">MyHiController</div><div id="t26" style="position:absolute;left:62.56px;top:111.20px;font:400 16px/16px 'Liberation Sans', sans-serif;color:#000;white-space:pre;transform:scaleX(1.0449);transform-origin:0 0;">Project</div><div id="t27" style="position:absolute;left:608.66px;top:111.50px;font:400 16px/16px 'Liberation Sans', sans-serif;color:#000;white-space:pre;transform:scaleX(1.0420);transform-origin:0 0;">MyHiController.java</div><div id="t28" style="position:absolute;left:922.48px;top:111.50px;font:400 16px/16px 'Liberation Sans', sans-serif;color:#000;white-space:pre;transform:scaleX(1.0246);transform-origin:0 0;">MyMainApp.java</div><div id="t29" style="position:absolute;left:1212.96px;top:111.50px;font:400 16px/16px 'Liberation Sans', sans-serif;color:#000;white-space:pre;transform:scaleX(1.0413);transform-origin:0 0;">MySpringApplication.java</div><div id="t30" style="position:absolute;left:1570.64px;top:111.50px;font:400 16px/16px 'Liberation Sans', sans-serif;color:#000;white-space:pre;transform:scaleX(1.0605);transform-origin:0 0;">MyWebApplicationInitializer.java</div><div id="t31" style="position:absolute;left:708.47px;top:145.20px;font:400 16px/16px 'Liberation Sans', sans-serif;color:#000;white-space:pre;transform:scaleX(1.0289);transform-origin:0 0;">Monster.java</div><div id="t32" style="position:absolute;left:1170.69px;top:145.20px;font:400 16px/16px 'Liberation Sans', sans-serif;color:#000;white-space:pre;transform:scaleX(1.0069);transform-origin:0 0;">MyConfig.java</div><div id="t33" style="position:absolute;left:1645.74px;top:145.20px;font:400 16px/16px 'Liberation Sans', sans-serif;color:#000;white-space:pre;transform:scaleX(1.0627);transform-origin:0 0;">pom.xml</div><div id="t34" style="position:absolute;left:76.6px;top:141.20px;font:700 16px/16px 'Liberation Sans', sans-serif;color:#000;white-space:pre;transform:scaleX(0.9636);transform-origin:0 0;">quickstart</div><div id="t35" style="position:absolute;left:98.19px;top:166.20px;font:400 16px/16px 'Liberation Sans', sans-serif;color:#83833f;white-space:pre;transform:scaleX(1.0059);transform-origin:0 0;">.idea</div><div id="t36" style="position:absolute;left:99.2px;top:191.20px;font:700 16px/16px 'Liberation Sans', sans-serif;color:#000;white-space:pre;transform:scaleX(1.0000);transform-origin:0 0;">demo01</div><div id="t37" style="position:absolute;left:98.2px;top:216.20px;font:700 16px/16px 'Liberation Sans', sans-serif;color:#000;white-space:pre;transform:scaleX(1.0000);transform-origin:0 0;">mySpringBoot</div><div id="t38" style="position:absolute;left:121.8px;top:241.20px;font:400 16px/16px 'Liberation Sans', sans-serif;color:#000;white-space:pre;transform:scaleX(0.9714);transform-origin:0 0;">src</div><div id="t39" style="position:absolute;left:143.37px;top:266.20px;font:400 16px/16px 'Liberation Sans', sans-serif;color:#000;white-space:pre;transform:scaleX(1.0303);transform-origin:0 0;">main</div><div id="t40" style="position:absolute;left:167.85px;top:291.20px;font:400 16px/16px 'Liberation Sans', sans-serif;color:#000;white-space:pre;transform:scaleX(0.8516);transform-origin:0 0;">java</div><div id="t41" style="position:absolute;left:189.6px;top:316.20px;font:400 16px/16px 'Liberation Sans', sans-serif;color:#000;white-space:pre;transform:scaleX(1.0200);transform-origin:0 0;">com</div><div id="t42" style="position:absolute;left:211.2px;top:341.20px;font:400 16px/16px 'Liberation Sans', sans-serif;color:#000;white-space:pre;transform:scaleX(1.0037);transform-origin:0 0;">rainbowsea</div><div id="t43" style="position:absolute;left:233.71px;top:366.20px;font:400 16px/16px 'Liberation Sans', sans-serif;color:#000;white-space:pre;transform:scaleX(1.0863);transform-origin:0 0;">myspringboot</div><div id="t44" style="position:absolute;left:256.39px;top:391.20px;font:400 16px/16px 'Liberation Sans', sans-serif;color:#000;white-space:pre;transform:scaleX(1.0118);transform-origin:0 0;">bean</div><div id="t45" style="position:absolute;left:298.32px;top:416.20px;font:400 16px/16px 'Liberation Sans', sans-serif;color:#000;white-space:pre;transform:scaleX(1.0772);transform-origin:0 0;">Monster</div><div id="t46" style="position:absolute;left:257.4px;top:441.20px;font:400 16px/16px 'Liberation Sans', sans-serif;color:#000;white-space:pre;transform:scaleX(1.0429);transform-origin:0 0;">config</div><div id="t47" style="position:absolute;left:298.34px;top:466.20px;font:400 16px/16px 'Liberation Sans', sans-serif;color:#000;white-space:pre;transform:scaleX(1.0561);transform-origin:0 0;">MyConfig</div><div id="t48" style="position:absolute;left:257.4px;top:491.20px;font:400 16px/16px 'Liberation Sans', sans-serif;color:#000;white-space:pre;transform:scaleX(1.0697);transform-origin:0 0;">controller</div><div id="t49" style="position:absolute;left:298.33px;top:516.20px;font:400 16px/16px 'Liberation Sans', sans-serif;color:#000;white-space:pre;transform:scaleX(1.0686);transform-origin:0 0;">MyHiController</div><div id="t50" style="position:absolute;left:275.73px;top:541.20px;font:400 16px/16px 'Liberation Sans', sans-serif;color:#000;white-space:pre;transform:scaleX(1.0687);transform-origin:0 0;">MyMainApp</div><div id="t51" style="position:absolute;left:275.73px;top:566.20px;font:400 16px/16px 'Liberation Sans', sans-serif;color:#000;white-space:pre;transform:scaleX(1.0687);transform-origin:0 0;">MySpringApplication</div><div id="t52" style="position:absolute;left:275.74px;top:591.20px;font:400 16px/16px 'Liberation Sans', sans-serif;color:#000;white-space:pre;transform:scaleX(1.0552);transform-origin:0 0;">MyWebApplicationInitializer</div><div id="t53" style="position:absolute;left:165.39px;top:616.20px;font:400 16px/16px 'Liberation Sans', sans-serif;color:#000;white-space:pre;transform:scaleX(1.0130);transform-origin:0 0;">resources</div><div id="t54" style="position:absolute;left:144.4px;top:641.20px;font:400 16px/16px 'Liberation Sans', sans-serif;color:#000;white-space:pre;transform:scaleX(1.0500);transform-origin:0 0;">test</div><div id="t55" style="position:absolute;left:121.8px;top:666.20px;font:400 16px/16px 'Liberation Sans', sans-serif;color:#83833f;white-space:pre;transform:scaleX(1.0732);transform-origin:0 0;">target</div><div id="t56" style="position:absolute;left:120.55px;top:691.20px;font:400 16px/16px 'Liberation Sans', sans-serif;color:#83833f;white-space:pre;transform:scaleX(1.0492);transform-origin:0 0;">mySpringBoot.iml</div><div id="t57" style="position:absolute;left:120.54px;top:716.20px;font:400 16px/16px 'Liberation Sans', sans-serif;color:#000;white-space:pre;transform:scaleX(1.0610);transform-origin:0 0;">pom.xml</div><div id="t58" style="position:absolute;left:98.21px;top:741.20px;font:700 16px/16px 'Liberation Sans', sans-serif;color:#000;white-space:pre;transform:scaleX(0.9899);transform-origin:0 0;">springboot_lombok</div><div id="t59" style="position:absolute;left:98.23px;top:766.20px;font:700 16px/16px 'Liberation Sans', sans-serif;color:#000;white-space:pre;transform:scaleX(0.9686);transform-origin:0 0;">springboot_spring_initializr</div><div id="t60" style="position:absolute;left:157.48px;top:141.20px;font:400 16px/16px 'Liberation Sans', sans-serif;color:#8c8c8c;white-space:pre;transform:scaleX(1.0239);transform-origin:0 0;">E:\Java\SpringBoot\quickstart</div><div id="t61" style="position:absolute;left:1379.54px;top:728.60px;font:400 34px/34px 'Liberation Sans', sans-serif;color:#ececec;white-space:pre;transform:scaleX(0.9551);transform-origin:0 0;text-shadow:0.8px 0.8px 0.7px #b0b0b0;">CSDN @ChinaRainbowSea</div></body></html>
